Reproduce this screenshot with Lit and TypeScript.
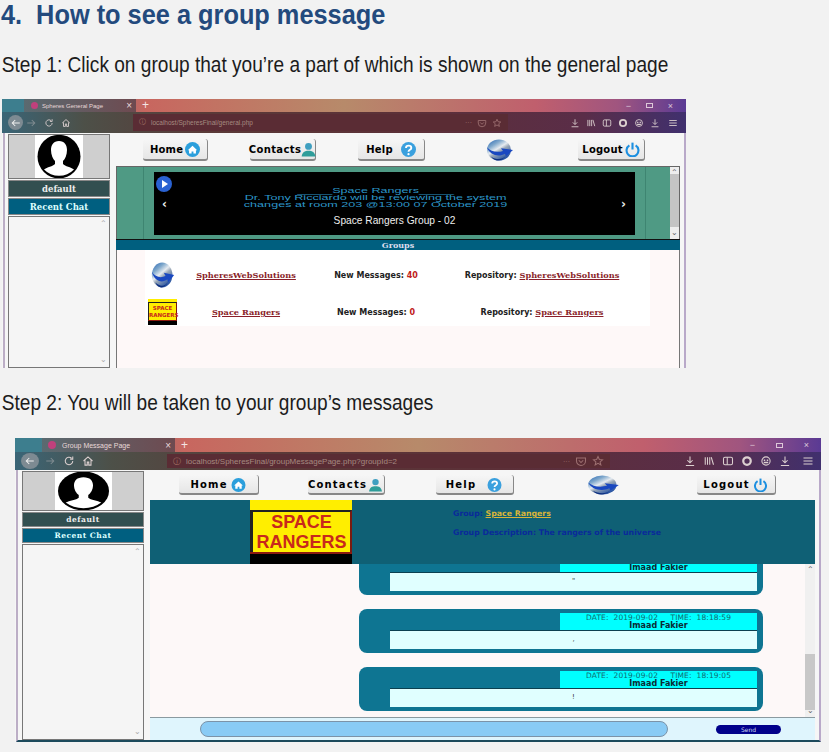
import { LitElement, css, html, svg } from 'lit';
import { customElement } from 'lit/decorators.js';

// shared small icons, stroked in currentColor so the toolbar can tint them
const stroke = (body: unknown, w = 14) => html`<svg width=${w} height=${w} viewBox="0 0 16 16" fill="none" stroke="currentColor" stroke-width="1.4">${body}</svg>`;

const tbIcons = {
	back: svg`<path d="M13 8H3M7 4L3 8l4 4"/>`,
	reload: svg`<path d="M13 8a5 5 0 1 1-1.600-3.700M13 2v3.500h-3.500"/>`,
	house: svg`<path d="M2 8l6-5.500L14 8M4 7v6.500h3v-4h2v4h3V7"/>`,
	pocket: svg`<path d="M2 4h12v4a6 6 0 0 1-12 0zM5 7l3 3 3-3"/>`,
	star: svg`<path d="M8 2l1.800 4 4.200.400-3.200 2.800 1 4.200L8 11.200 4.200 13.400l1-4.200L2 6.400 6.200 6z"/>`,
	down: svg`<path d="M8 2v8M4.500 7L8 10.500 11.500 7M2.500 14h11"/>`,
	library: svg`<path d="M3 3v10M6 3v10M9 3v10M11 3l3 10"/>`,
	panel: svg`<rect x="2" y="3" width="12" height="10" rx="2"/><path d="M7 3v10"/>`,
	ring: svg`<circle cx="8" cy="8" r="5" stroke-width="3"/>`,
	mask: svg`<circle cx="8" cy="8" r="5.500"/><path d="M5 7h2M9 7h2M5 10h6" stroke-width="2"/>`,
	menu: svg`<path d="M2 4h12M2 8h12M2 12h12"/>`,
};

const homeIcon = html`<svg class="nav-ico" viewBox="0 0 24 24"><circle cx="12" cy="12" r="12" fill="#2b9fdc"/><path d="M4.500 13L12 6l7.500 7h-2v5.500h-4v-3.500h-3v3.500h-4v-5.500z" fill="#fff"/></svg>`;
const contactIcon = html`<svg class="nav-ico" viewBox="0 0 24 24"><circle cx="12" cy="7" r="5.500" fill="#3f9fc0"/><path d="M1 23c1-7 5-9 11-9s10 2 11 9z" fill="#2f9d9a"/></svg>`;
const helpIcon = html`<svg class="nav-ico" viewBox="0 0 24 24"><circle cx="12" cy="12" r="12" fill="#3aa0de"/><path d="M8 9.500c0-5 8.500-5 8.500 0 0 3-4.500 3-4.500 6" fill="none" stroke="#fff" stroke-width="3"/><circle cx="12" cy="19.500" r="1.800" fill="#fff"/></svg>`;
const powerIcon = html`<svg class="nav-ico" viewBox="0 0 24 24" fill="none" stroke="#1c8fe0" stroke-width="3.400"><path d="M7 5.500a9.500 9.500 0 1 0 10 0"/><path d="M12 1v11"/></svg>`;

const globe = (cls: string, id: string) => html`<svg class=${cls} viewBox="0 0 28 24" preserveAspectRatio="none">
	<defs><linearGradient id=${id} x1="0" y1="0" x2="0.7" y2="1"><stop offset="0" stop-color="#1f5fb0"/><stop offset="0.3" stop-color="#7fa8cc"/><stop offset="0.5" stop-color="#e6ebf0"/><stop offset="0.62" stop-color="#9aa8b8"/><stop offset="1" stop-color="#1a4aa0"/></linearGradient></defs>
	<ellipse cx="13" cy="12" rx="12" ry="11.500" fill="url(#${id})"/>
	<path d="M1 9c4 5 10 6 16 4l-2-3 12 2-7 7-1-3c-6 4-15 2-18-7z" fill="#1a48c0"/>
	<path d="M5 19c5 4 12 4 15-1-3 6-11 8-15 1z" fill="#0d2f80"/>
</svg>`;

const avatar = html`<svg class="avatar" viewBox="0 0 48 45" preserveAspectRatio="none">
	<rect width="48" height="45" fill="#fff"/>
	<ellipse cx="24" cy="22.500" rx="21.500" ry="21.800" fill="#000"/>
	<path d="M24 7c5.500 0 8 4 8 9s-2 9-4 11v3c2 2.500 8 3 11 5.500a21 21 0 0 1-30 0c3-2.500 9-3 11-5.500v-3c-2-2-4-6-4-11s2.500-9 8-9z" fill="#fff"/>
</svg>`;

const logo = (cls: string) => html`<div class="logo ${cls}">
	<div class="logo-in"><span>SPACE</span><span>RANGERS</span></div>
	<div class="logo-foot"></div>
</div>`;

const navBar = html`<div class="nav">
	<div class="btn home">Home ${homeIcon}</div>
	<div class="btn contacts">Contacts${contactIcon}</div>
	<div class="btn help">Help ${helpIcon}</div>
	${globe('nav-globe', 'g-nav')}
	<div class="btn logout">Logout ${powerIcon}</div>
</div>`;

const sidebar = html`<div class="side">
	<div class="avatar-box">${avatar}</div>
	<div class="side-bar name">default</div>
	<div class="side-bar chat">Recent Chat</div>
	<div class="chat-list"><span class="sb-up">⌃</span><span class="sb-dn">⌄</span></div>
</div>`;

const chrome = (title: string, url: string) => html`<div class="tabs">
	<div class="tab"><i class="fav"></i><span>${title}</span><b>×</b></div>
	<span class="plus">+</span>
	<div class="winctl"><span>−</span><span class="mx"></span><span>×</span></div>
</div>
<div class="tools">
	<span class="backbtn">${stroke(tbIcons.back, 12)}</span>
	<span class="tb fwd">${stroke(tbIcons.back, 12)}</span>
	<span class="tb">${stroke(tbIcons.reload, 10)}</span>
	<span class="tb">${stroke(tbIcons.house, 10)}</span>
	<div class="url">
		<span class="info">ⓘ</span><span class="addr">${url}</span>
		<span class="tb dots">···</span><span class="tb">${stroke(tbIcons.pocket, 10)}</span><span class="tb">${stroke(tbIcons.star, 10)}</span>
	</div>
	<div class="right-ico">
		${[tbIcons.down, tbIcons.library, tbIcons.panel, tbIcons.ring, tbIcons.mask, tbIcons.down].map((p) => html`<span class="tb">${stroke(p, 10)}</span>`)}
	</div>
	<span class="tb menu">${stroke(tbIcons.menu, 10)}</span>
</div>`;

@customElement('app-root')
export class AppRoot extends LitElement {
	static styles = css`
		:host {
			display: block;
			width: 829px;
			height: 752px;
			overflow: hidden;
			background: #f2f2f2;
			color: #000;
			font-family: "Liberation Sans", sans-serif;
		}
		h1 {
			margin: 0;
			height: 30px;
			padding-left: 1px;
			font: bold 28px/30px "Liberation Sans", sans-serif;
			color: #234a7d;
			white-space: pre;
			transform: scaleX(0.905);
			transform-origin: 0 0;
		}
		.step {
			padding-left: 2px;
			font: 21.500px/24px "Liberation Sans", sans-serif;
			color: #1c1c1c;
			white-space: nowrap;
			transform: scaleX(0.888);
			transform-origin: 0 0;
		}
		.step.s1 { margin-top: 23px; }
		.step.s2 { margin-top: 23px; }

		.win {
			--tabs: 13px;
			--tools: 21px;
			overflow: hidden;
			display: flex;
			flex-direction: column;
			background: #f6f6f6;
		}
		.one {
			margin: 22px 0 0 2px;
			width: 684px;
			height: 269px;
		}
		.two {
			--tabs: 14px;
			--tools: 18px;
			margin: 23px 0 0 15px;
			width: 806px;
			height: 304px;
		}

		/* browser chrome */
		.tabs {
			flex: none;
			height: var(--tabs);
			display: flex;
			align-items: stretch;
			background: linear-gradient(90deg, #3d7e8e 0, #3d7e8e 3%, #c8665f 21%, #b78a6a 50%, #c05f6d 78%, #a0557f 90%, #5a3a94 100%);
			color: #e8d8d8;
			font-size: 6px;
		}
		.tab {
			margin-left: 22px;
			width: 112px;
			display: flex;
			align-items: center;
			gap: 4px;
			padding-left: 7px;
			box-sizing: border-box;
			background: linear-gradient(90deg, #5a6a70, #6e4a50);
		}
		.tab span { flex: 1; }
		.tab b { font-weight: normal; font-size: 10px; padding-right: 4px; }
		.fav { width: 7px; height: 7px; border-radius: 50%; background: #c0407c; }
		.plus { margin-left: 6px; font-size: 12px; line-height: var(--tabs); color: #f3e4e4; }
		.winctl {
			margin-left: auto;
			display: flex;
			align-items: center;
			gap: 14px;
			padding-right: 12px;
			font-size: 9px;
			color: #ddc8d8;
		}
		.winctl span { width: 7px; text-align: center; }
		.mx { height: 5px; border: 1px solid #ddc8d8; box-sizing: border-box; }
		.two .tabs { font-size: 7px; }
		.two .tab { margin-left: 27px; width: 133px; padding-left: 6px; }
		.two .fav { width: 8px; height: 8px; }
		.two .tab span { padding-left: 2px; }
		.two .winctl { gap: 20px; padding-right: 11px; }
		.tools {
			flex: none;
			height: var(--tools);
			display: flex;
			align-items: center;
			padding-left: 6px;
			gap: 7px;
			background: linear-gradient(90deg, #3a6577 0, #4d5048 12%, #5a3a38 30%, #5c3038 60%, #5a2d48 85%, #40306e 100%);
			color: #dcd0d0;
		}
		.tb { display: inline-flex; align-items: center; justify-content: center; flex: none; }
		.fwd { opacity: 0.4; transform: scaleX(-1); margin-left: -5px; }
		.backbtn {
			flex: none;
			width: 15px;
			height: 15px;
			border-radius: 50%;
			display: inline-flex;
			align-items: center;
			justify-content: center;
			background: #7d8a92;
			color: #eee;
		}
		.url {
			margin-left: 55px;
			width: 375px;
			align-self: stretch;
			margin-block: 2px;
			display: flex;
			align-items: center;
			gap: 5px;
			padding-right: 6px;
			box-sizing: border-box;
			background: #5a2c34;
			font-size: 6.500px;
			color: #a58a80;
		}
		.info { margin-left: 6px; color: #a87868; }
		.addr { flex: 1; }
		.dots { color: #a08078; font-size: 7px; }
		.url .tb { color: #9c6f70; }
		.right-ico { margin-left: 55px; display: flex; gap: 6px; }
		.menu { margin-left: auto; margin-right: 8px; }
		.two .tb svg { width: 12px; height: 12px; }
		.two .backbtn { width: 18px; height: 16px; }
		.two .fwd { margin-left: -2px; }
		.two .url { margin-left: 66px; width: 443px; font-size: 8px; }
		.two .right-ico { margin-left: 67px; gap: 7px; }
		.two .menu { margin-right: 7px; }

		/* page inside the browser */
		.page {
			flex: 1;
			min-height: 0;
			display: flex;
			background: #f6f6f6;
			border-left: 2px solid #bcaec6;
			border-right: 2px solid #b9a9c9;
			margin-left: 1px;
		}
		.side {
			flex: none;
			width: 102px;
			margin: 1px 0 0 3px;
			display: flex;
			flex-direction: column;
			gap: 1px;
		}
		.avatar-box {
			height: 45px;
			flex: none;
			display: flex;
			justify-content: center;
			background: #cfcfcf;
			outline: 1px solid #777;
			outline-offset: -1px;
		}
		.avatar { height: 100%; width: 48px; display: block; }
		.side-bar {
			flex: none;
			height: 17px;
			display: flex;
			align-items: center;
			justify-content: center;
			color: #eee;
			font: bold 8.500px "DejaVu Serif", serif;
			border: 1px solid #888;
			box-sizing: border-box;
		}
		.name { background: #324f50; }
		.chat { background: #005f80; color: #dff; }
		.chat-list {
			flex: 1;
			position: relative;
			background: #f5f5f5;
			border: 1px solid #777;
		}
		.sb-up, .sb-dn { position: absolute; right: 2px; font-size: 8px; line-height: 8px; color: #aaa; }
		.sb-up { top: 3px; }
		.sb-dn { bottom: 3px; }
		.main {
			flex: 1;
			min-width: 0;
			margin-left: 6px;
			margin-right: 4px;
			display: flex;
			flex-direction: column;
		}
		.nav {
			flex: none;
			height: 33px;
			display: flex;
			align-items: center;
		}
		.btn {
			flex: none;
			box-sizing: border-box;
			height: 22px;
			padding-top: 1px;
			display: flex;
			align-items: center;
			justify-content: center;
			gap: 2px;
			background: linear-gradient(#f6f6f6, #e6e6e6);
			border-right: 1px solid #888;
			border-bottom: 2px solid #888;
			border-radius: 3px;
			font: bold 10px "DejaVu Sans", sans-serif;
			letter-spacing: 0.2px;
		}
		.nav-ico { height: 15px; width: 15px; flex: none; }
		.one .btn.home { margin-left: 27px; width: 65px; }
		.one .btn.contacts { margin-left: 42px; width: 66px; gap: 0; letter-spacing: 0.4px; }
		.one .btn.help { margin-left: 42px; width: 67px; gap: 8px; }
		.one .nav-globe { margin-left: 61px; width: 28px; height: 22px; }
		.one .btn.logout { margin-left: 64px; width: 67px; }

		/* first shot: carousel and groups */
		.band {
			flex: none;
			height: 73px;
			display: flex;
			background: #4f9a84;
			border: 1px solid #666;
			border-bottom: 0;
			box-sizing: border-box;
		}
		.band-in {
			margin-left: 26px;
			padding: 5px 10px;
			border-inline: 1px solid #3e8571;
			display: flex;
		}
		.slide {
			position: relative;
			width: 481px;
			height: 63px;
			background: #000;
			color: #2c96c8;
			text-align: center;
			font-size: 7px;
			line-height: 7px;
		}
		.slide-txt { padding: 15px 21px 0 0; transform: scaleX(1.8); white-space: nowrap; }
		.caption { margin-top: 7px; color: #eee; font-size: 10.200px; line-height: 12px; }
		.play {
			position: absolute;
			left: 2px;
			top: 4px;
			width: 16px;
			height: 16px;
		}
		.chev { position: absolute; top: 25px; color: #eee; font: bold 12px/14px "DejaVu Sans", sans-serif; }
		.chev.l { left: 8px; }
		.chev.r { right: 9px; }
		.band-sb {
			position: relative;
			margin-left: auto;
			width: 9px;
			background: linear-gradient(#eee 0, #eee 10%, #c4c4c4 10%, #c4c4c4 84%, #eee 84%);
		}
		.band-sb .sb-up, .band-sb .sb-dn, .msg-sb .sb-up, .msg-sb .sb-dn { right: 1px; color: #666; }
		.band-sb .sb-up, .msg-sb .sb-up { top: 2px; }
		.band-sb .sb-dn, .msg-sb .sb-dn { bottom: 2px; }
		.groups-bar {
			flex: none;
			height: 11px;
			box-sizing: border-box;
			border-top: 1px solid #111;
			background: #005f7f;
			color: #dde;
			text-align: center;
			font: bold 8px/10px "DejaVu Serif", serif;
		}
		.groups {
			flex: 1;
			background: #fef8f8;
			border-left: 1px solid #777;
			border-right: 1px solid #777;
		}
		.grid {
			margin-left: 28px;
			width: 505px;
			padding: 12px 0 1px;
			box-sizing: border-box;
			background: #fff;
			display: grid;
			grid-template-columns: 35px 132px 128px 204px;
			grid-auto-rows: 26px;
			row-gap: 11px;
			align-items: center;
			justify-items: center;
			font: bold 8px "DejaVu Sans", sans-serif;
			color: #222;
		}
		.grid a { color: #8a1f2a; text-decoration: underline; font-family: "DejaVu Serif", serif; font-size: 8.200px; }
		.grid em { color: #c02020; font-style: normal; }
		.row-globe { width: 24px; height: 26px; }

		.logo {
			display: flex;
			flex-direction: column;
			box-sizing: border-box;
			background: #ffee00;
			color: #c8281c;
			font-weight: bold;
			text-align: center;
		}
		.logo-in {
			flex: 1;
			display: flex;
			flex-direction: column;
			justify-content: center;
			border-top: 2px solid #222;
			border-left: 5px solid #222;
			border-right: 2px solid #7a1a10;
			background: #ffee00;
			white-space: nowrap;
		}
		.logo-foot { background: #000; border-top: 2px solid #8c1a10; }
		.logo.small { width: 29px; height: 26px; padding-top: 3px; font-size: 5.500px; line-height: 7px; }
		.logo.small .logo-in { border-top-width: 1px; border-left-width: 1px; border-right-width: 1px; }
		.logo.small .logo-foot { height: 4px; border-top-width: 1px; }
		.logo.big { flex: none; width: 102px; height: 64px; padding-top: 10px; font-size: 18px; line-height: 20px; }
		.logo.big .logo-in { border-left-width: 3px; }
		.logo.big .logo-foot { height: 11px; }

		/* second shot: message page */
		.two .side { width: 122px; margin-left: 4px; }
		.two .avatar-box { height: 40px; }
		.two .avatar { width: 57px; }
		.two .side-bar { height: 15px; font-size: 7.500px; letter-spacing: 0.5px; }
		.two .main { margin-left: 6px; margin-right: 4px; }
		.two .nav { height: 30px; }
		.two .btn { height: 20px; font-size: 10px; letter-spacing: 1.200px; }
		.two .nav-ico { width: 17px; height: 14px; }
		.two .btn.home { margin-left: 29px; width: 80px; }
		.two .btn.contacts { margin-left: 49px; width: 77px; gap: 0; }
		.two .btn.help { margin-left: 51px; width: 78px; gap: 10px; }
		.two .nav-globe { margin-left: 73px; width: 33px; height: 20px; }
		.two .btn.logout { margin-left: 77px; width: 79px; }
		.head {
			flex: none;
			height: 64px;
			display: flex;
			background: #0f6075;
			position: relative;
			z-index: 1;
		}
		.head .logo { margin-left: 100px; }
		.head-txt {
			margin-left: 101px;
			padding-top: 9px;
			font: bold 7.800px "DejaVu Sans", sans-serif;
			color: #0a2a9a;
		}
		.head-txt p { margin: 0 0 10px; line-height: 9px; }
		.head-txt a { color: #d8b53a; text-decoration: underline; }
		.msgs {
			flex: 1;
			min-height: 0;
			display: flex;
			background: #fdf8f8;
		}
		.list {
			flex: 1;
			display: flex;
			flex-direction: column;
			justify-content: flex-end;
			gap: 14px;
			padding: 0 0 6px 209px;
			overflow: hidden;
		}
		.card {
			flex: none;
			box-sizing: border-box;
			width: 404px;
			height: 44px;
			padding: 4px 6px 4px 31px;
			display: flex;
			flex-direction: column;
			align-items: flex-end;
			background: #0e7592;
			border-radius: 8px;
		}
		/* first card is scrolled up under the header, only its name line shows */
		.card.scrolled {
			height: 31px;
			padding-top: 0;
			border-radius: 0 0 8px 8px;
		}
		.card.scrolled .stamp { height: 8px; }
		.stamp {
			width: 197px;
			height: 17px;
			background: #00ffff;
			color: #116a70;
			text-align: center;
			font: 7.500px/9px "DejaVu Sans", sans-serif;
			letter-spacing: 0.1px;
			white-space: pre;
		}
		.stamp b { display: block; color: #0b2a34; font-size: 8px; line-height: 8px; letter-spacing: 0; }
		.body {
			align-self: stretch;
			flex: 1;
			background: #e0ffff;
			border-top: 1px solid #0b4050;
			text-align: center;
			font: 7px/16px "DejaVu Sans", sans-serif;
			color: #333;
		}
		.msg-sb {
			position: relative;
			flex: none;
			width: 10px;
			display: flex;
			flex-direction: column;
			justify-content: flex-end;
			background: #f0f0f0;
		}
		.msg-sb i { display: block; height: 56px; margin-bottom: 7px; background: #c8c8c8; }
		.send-bar {
			flex: none;
			height: 23px;
			display: flex;
			align-items: center;
			background: #dff5fd;
			border-top: 1px solid #8a9aa0;
			box-sizing: border-box;
		}
		.input {
			margin-left: 50px;
			width: 468px;
			height: 16px;
			box-sizing: border-box;
			border-radius: 8px;
			background: #89cbf5;
			border: 1px solid #7c93a8;
		}
		.send {
			margin-left: 48px;
			width: 65px;
			height: 9px;
			border-radius: 5px;
			background: #00008b;
			color: #cfd8f0;
			text-align: center;
			font: 6px/9px "DejaVu Sans", sans-serif;
		}
		.two .page { border-bottom: 2px solid #1c4a5c; }
	`;

	render() {
		return html`
			<h1>4.  How to see a group message</h1>
			<div class="step s1">Step 1: Click on group that you’re a part of which is shown on the general page</div>

			<div class="win one">
				${chrome('Spheres General Page', 'localhost/SpheresFinal/general.php')}
				<div class="page">
					${sidebar}
					<div class="main">
						${navBar}
						<div class="band">
							<div class="band-in">
								<div class="slide">
									<div class="slide-txt">_____Space Rangers_____<br>Dr. Tony Ricciardo will be reviewing the system<br>changes at room 203 @13:00 07 October 2019</div>
									<div class="caption">Space Rangers Group - 02</div>
									<svg class="play" viewBox="0 0 16 16"><circle cx="8" cy="8" r="8" fill="#2a62d2"/><path d="M6 4l6 4-6 4z" fill="#fff"/></svg>
									<span class="chev l">‹</span><span class="chev r">›</span>
								</div>
							</div>
							<div class="band-sb"><span class="sb-up">⌃</span><span class="sb-dn">⌄</span></div>
						</div>
						<div class="groups-bar">Groups</div>
						<div class="groups">
							<div class="grid">
								${globe('row-globe', 'g-row')}
								<a>SpheresWebSolutions</a>
								<span>New Messages: <em>40</em></span>
								<span>Repository: <a>SpheresWebSolutions</a></span>
								${logo('small')}
								<a>Space Rangers</a>
								<span>New Messages: <em>0</em></span>
								<span>Repository: <a>Space Rangers</a></span>
							</div>
						</div>
					</div>
				</div>
			</div>

			<div class="step s2">Step 2: You will be taken to your group’s messages</div>

			<div class="win two">
				${chrome('Group Message Page', 'localhost/SpheresFinal/groupMessagePage.php?groupId=2')}
				<div class="page">
					${sidebar}
					<div class="main">
						${navBar}
						<div class="head">
							${logo('big')}
							<div class="head-txt">
								<p>Group: <a>Space Rangers</a></p>
								<p>Group Description: The rangers of the universe</p>
							</div>
						</div>
						<div class="msgs">
							<div class="list">
								<div class="card scrolled">
									<div class="stamp"><b>Imaad Fakier</b></div>
									<div class="body">"</div>
								</div>
								${this.renderCard('18:18:59', ',')}
								${this.renderCard('18:19:05', '!')}
							</div>
							<div class="msg-sb"><span class="sb-up">⌃</span><i></i><span class="sb-dn">⌄</span></div>
						</div>
						<div class="send-bar">
							<div class="input"></div>
							<div class="send">Send</div>
						</div>
					</div>
				</div>
			</div>
		`;
	}

	renderCard(time: string, text: string) {
		return html`<div class="card">
			<div class="stamp">DATE:  2019-09-02     TIME:  ${time}<b>Imaad Fakier</b></div>
			<div class="body">${text}</div>
		</div>`;
	}
}
